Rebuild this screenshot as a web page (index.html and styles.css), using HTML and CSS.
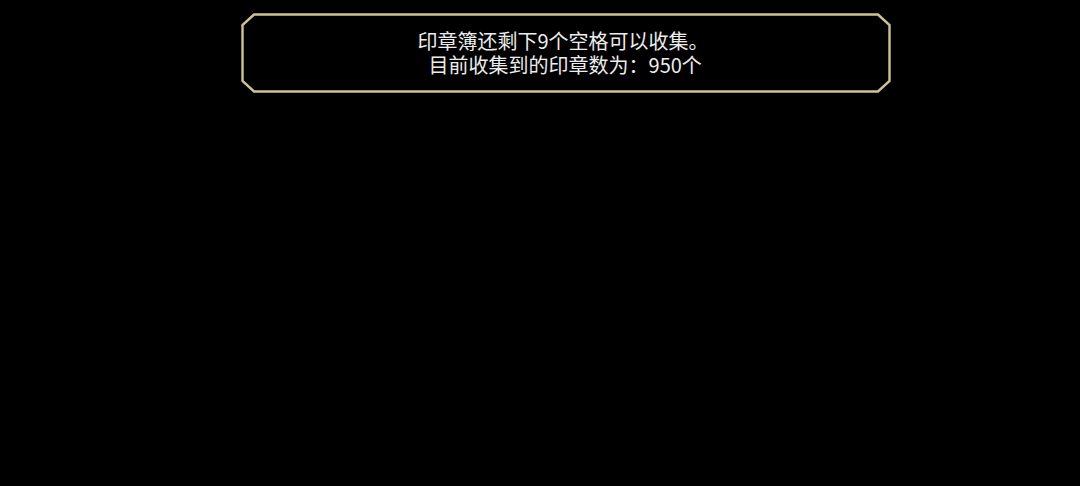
FILE: index.html
```html
<!DOCTYPE html>
<html lang="zh-CN">
<head>
<meta charset="utf-8">
<link rel="stylesheet" href="styles.css">
</head>
<body>
<div class="page">
  <div class="notice">
    <svg class="frame" width="650" height="80" viewBox="0 0 650 80">
      <polygon points="13,1.5 637,1.5 648.5,12 648.5,68 637,78.5 13,78.5 1.5,68 1.5,12" fill="none" stroke="#cfc396" stroke-width="2.4"/>
    </svg>
    <div class="text">
      <div class="line">印章簿还剩下9个空格可以收集。</div>
      <div class="line">&nbsp;目前收集到的印章数为：950个</div>
    </div>
  </div>
</div>
</body>
</html>
```
FILE: styles.css
```css
html, body {
  margin: 0;
  padding: 0;
  background: #000;
}
.page {
  width: 1080px;
  height: 486px;
  background: #000;
  padding-top: 13px;
  box-sizing: border-box;
}
.notice {
  position: relative;
  margin-left: 241px;
  width: 650px;
  height: 80px;
  box-sizing: border-box;
  padding: 0 6px 0 0;
  display: flex;
  align-items: center;
  justify-content: center;
}
.frame {
  position: absolute;
  left: 0;
  top: 0;
}
.text {
  position: relative;
  text-align: center;
  color: #ececec;
  font-family: "Noto Sans CJK SC", "Noto Sans", sans-serif;
  font-size: 20px;
  line-height: 24px;
}
.line {
  height: 24px;
}
```
